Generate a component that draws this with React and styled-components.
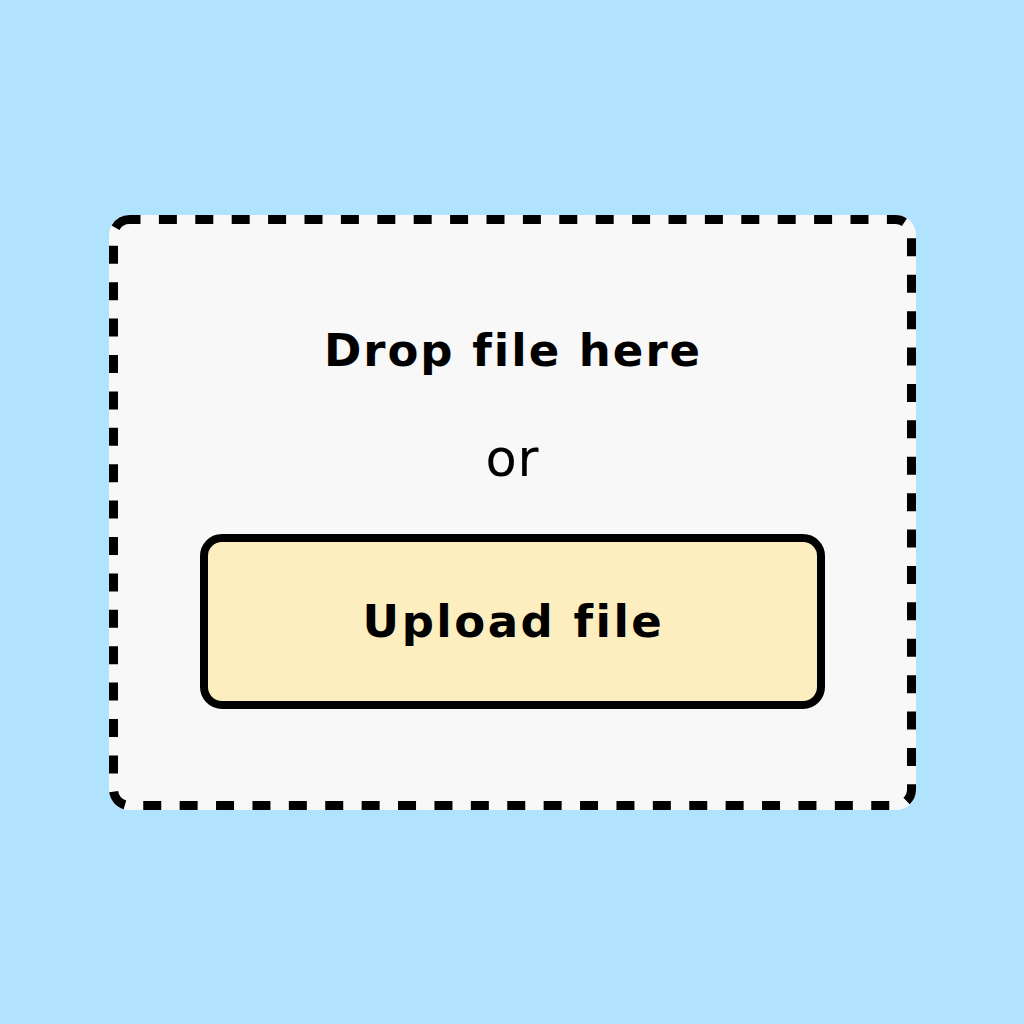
import React from "react";
import styled, { createGlobalStyle } from "styled-components";

const GlobalStyle = createGlobalStyle`
  body {
    margin: 0;
    background: #b1e2fe;
    font-family: "DejaVu Sans", "Liberation Sans", sans-serif;
    color: #000;
  }
`;

const Page = styled.div`
  width: 1024px;
  height: 1024px;
  display: grid;
  place-items: center;
`;

const DropZone = styled.div`
  position: relative;
  width: 807px;
  height: 595px;
  box-sizing: border-box;
  padding-top: 113px;
  background: #f8f8f8;
  border-radius: 20px;
  display: flex;
  flex-direction: column;
  align-items: center;
`;

// dashed outline drawn over the panel edge
const Outline = styled.svg`
  position: absolute;
  inset: 0;
  width: 100%;
  height: 100%;
  pointer-events: none;
`;

const Title = styled.div`
  font-size: 45px;
  font-weight: 700;
  line-height: 1;
  letter-spacing: 2px;
  margin-left: 2px;
`;

const Or = styled.div`
  margin-top: 60px;
  font-size: 51px;
  font-weight: 400;
  line-height: 1;
  letter-spacing: 1px;
  margin-left: 1px;
`;

const UploadButton = styled.button`
  margin-top: 50px;
  width: 625px;
  height: 175px;
  box-sizing: border-box;
  border: 8px solid #000;
  border-radius: 22px;
  background: #fdeebf;
  font-family: inherit;
  font-size: 45px;
  font-weight: 700;
  letter-spacing: 2.5px;
  padding: 0 0 0 3px;
  color: #000;
  cursor: pointer;
`;

function App() {
  return (
    <>
      <GlobalStyle />
      <Page>
        <DropZone>
          <Outline viewBox="0 0 807 595">
            <rect
              x="4.5"
              y="4.5"
              width="798"
              height="586"
              rx="16"
              fill="none"
              stroke="#000"
              strokeWidth="9"
              strokeDasharray="18 18.4"
              strokeDashoffset="7"
            />
          </Outline>
          <Title>Drop file here</Title>
          <Or>or</Or>
          <UploadButton>Upload file</UploadButton>
        </DropZone>
      </Page>
    </>
  );
}

export default App;
